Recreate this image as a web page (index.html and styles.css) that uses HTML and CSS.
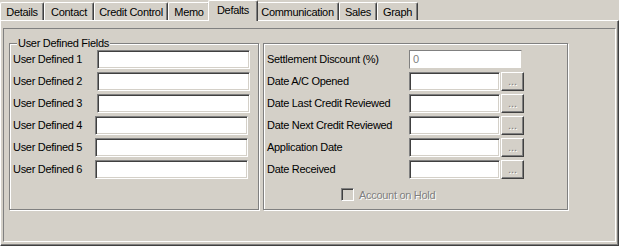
FILE: index.html
```html
<!DOCTYPE html>
<html>
<head>
    <title>Defalts</title>
    <link rel="stylesheet" href="styles.css">
</head>
<body>
    <div class="tabs">
        <div class="tab tab-details">Details</div>
        <div class="tab tab-contact">Contact</div>
        <div class="tab tab-credit">Credit Control</div>
        <div class="tab tab-memo">Memo</div>
        <div class="tab tab-defalts active">Defalts</div>
        <div class="tab tab-comm">Communication</div>
        <div class="tab tab-sales">Sales</div>
        <div class="tab tab-graph">Graph</div>
    </div>

    <div class="page">
        <div class="panel">
            <!-- left group -->
            <div class="group group-user">
                <span class="caption">User Defined Fields</span>
                <div class="row"><label class="lbl">User Defined 1</label><div class="edit"></div></div>
                <div class="row"><label class="lbl">User Defined 2</label><div class="edit"></div></div>
                <div class="row"><label class="lbl">User Defined 3</label><div class="edit"></div></div>
                <div class="row shift"><label class="lbl">User Defined 4</label><div class="edit"></div></div>
                <div class="row shift"><label class="lbl">User Defined 5</label><div class="edit"></div></div>
                <div class="row shift"><label class="lbl">User Defined 6</label><div class="edit"></div></div>
            </div>

            <!-- right group -->
            <div class="group group-dates">
                <div class="row"><label class="lbl">Settlement Discount (%)</label><div class="edit edit-disabled">0</div></div>
                <div class="row"><label class="lbl">Date A/C Opened</label><div class="edit edit-date"></div><div class="btn">...</div></div>
                <div class="row"><label class="lbl">Date Last Credit Reviewed</label><div class="edit edit-date"></div><div class="btn">...</div></div>
                <div class="row"><label class="lbl">Date Next Credit Reviewed</label><div class="edit edit-date"></div><div class="btn">...</div></div>
                <div class="row"><label class="lbl">Application Date</label><div class="edit edit-date"></div><div class="btn">...</div></div>
                <div class="row"><label class="lbl">Date Received</label><div class="edit edit-date"></div><div class="btn">...</div></div>
                <div class="check-row">
                    <div class="check"></div>
                    <span class="check-text">Account on Hold</span>
                </div>
            </div>
        </div>
    </div>
</body>
</html>
```

FILE: styles.css
```css
* {
    box-sizing: border-box;
}

body {
    margin: 0;
    width: 619px;
    height: 246px;
    overflow: hidden;
    background: #D4D0C8;
    font-family: 'Liberation Sans', Arial, sans-serif;
    font-size: 11px;
    letter-spacing: -0.3px;
    color: #000;
}

/* tab strip */
.tabs {
    display: flex;
    height: 20px;
}

.tab {
    height: 18px;
    margin-top: 2px;
    padding-top: 3px;
    line-height: 13px;
    text-align: center;
    border-top: 1px solid #fff;
    border-left: 1px solid #fff;
    border-right: 1px solid #404040;
    border-top-left-radius: 2px;
    border-top-right-radius: 2px;
    box-shadow: inset -1px 0 #808080;
}

.tab-details { width: 44px; }
.tab-contact { width: 50px; }
.tab-credit { width: 74px; }
.tab-memo { width: 42px; }
.tab-defalts { width: 46px; }
.tab-comm { width: 83px; }
.tab-sales { width: 38px; }
.tab-graph { width: 41px; }

.tab.active {
    position: relative;
    z-index: 1;
    height: 21px;
    margin-top: 0;
    margin-left: -2px;
    margin-right: -2px;
    width: 50px;
    padding-top: 3px;
    background: #D4D0C8;
}

/* tab page */
.page {
    height: 226px;
    padding: 7px 2px 3px 2px;
    border-top: 1px solid #fff;
    border-left: 1px solid #fff;
    border-right: 1px solid #404040;
    border-bottom: 1px solid #404040;
    box-shadow: inset -1px -1px #808080;
}

.panel {
    height: 214px;
    display: flex;
    gap: 4px;
    padding: 14px 0 0 5px;
    border-top: 1px solid #808080;
    border-left: 1px solid #808080;
    border-right: 1px solid #fff;
    border-bottom: 1px solid #fff;
}

/* etched group boxes */
.group {
    position: relative;
    height: 167px;
    padding: 6px 0 0 3px;
    display: flex;
    flex-direction: column;
    gap: 3px;
    border: 1px solid #808080;
    box-shadow: inset 1px 1px #fff, 1px 1px #fff;
}

.group-user {
    width: 250px;
}

.group-dates {
    width: 305px;
}

.caption {
    position: absolute;
    top: -8px;
    left: 7px;
    padding: 0 1px;
    line-height: 14px;
    background: #D4D0C8;
}

.row {
    display: flex;
    align-items: center;
    height: 19px;
}

.lbl {
    width: 84px;
    line-height: 13px;
}

.row.shift .lbl {
    width: 82px;
}

.group-dates .lbl {
    width: 142px;
}

.edit {
    width: 153px;
    height: 19px;
    padding: 2px 0 0 3px;
    background: #fff;
    line-height: 13px;
    border-top: 1px solid #808080;
    border-left: 1px solid #808080;
    border-right: 1px solid #fff;
    border-bottom: 1px solid #fff;
    box-shadow: inset 1px 1px #404040, inset -1px -1px #D4D0C8;
}

.edit-disabled {
    width: 113px;
    color: #808080;
    box-shadow: none;
    border-right-color: #D4D0C8;
    border-bottom-color: #D4D0C8;
}

.edit-date {
    width: 91px;
}

.btn {
    width: 23px;
    height: 19px;
    margin-left: 1px;
    text-align: center;
    line-height: 16px;
    color: #808080;
    letter-spacing: 0;
    text-shadow: 1px 1px #fff;
    border-top: 1px solid #fff;
    border-left: 1px solid #fff;
    border-right: 1px solid #404040;
    border-bottom: 1px solid #404040;
    box-shadow: inset -1px -1px #808080;
}

.check-row {
    display: flex;
    align-items: center;
    margin: 6px 0 0 74px;
    gap: 5px;
}

.check {
    width: 13px;
    height: 13px;
    border-top: 1px solid #808080;
    border-left: 1px solid #808080;
    border-right: 1px solid #fff;
    border-bottom: 1px solid #fff;
    box-shadow: inset 1px 1px #404040, inset -1px -1px #D4D0C8;
}

.check-text {
    color: #808080;
    text-shadow: 1px 1px #fff;
}
```
